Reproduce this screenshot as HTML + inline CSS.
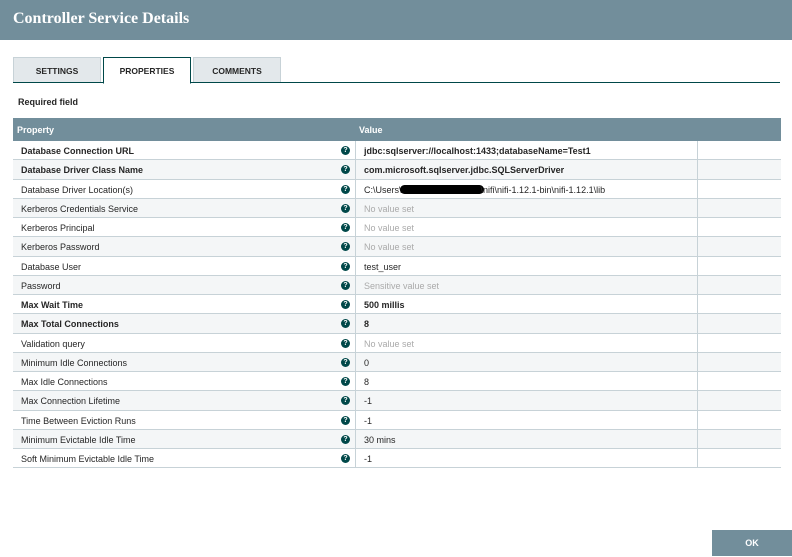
<!DOCTYPE html>
<html><head><meta charset="utf-8"><style>
*{box-sizing:border-box;margin:0;padding:0}
body{width:792px;height:556px;background:#fff;font-family:"Liberation Sans",Arial,sans-serif;position:relative;overflow:hidden;color:#262626}
.hdr{position:absolute;left:0;top:0;width:792px;height:40px;background:#728e9b;color:#fff;font-family:"Liberation Serif",serif;font-weight:bold;font-size:16px;line-height:38px;padding-left:13px}
.tabline{position:absolute;left:13px;top:82px;width:767px;height:1px;background:#004849}
.tab{position:absolute;top:57px;height:25px;width:88px;background:#e3e8eb;border:1px solid #c7d2d7;border-bottom:none;font-size:8.5px;font-weight:bold;text-align:center;line-height:26px;color:#262626}
.tab.act{background:#fff;border:1px solid #004849;border-bottom:1px solid #fff;height:27px}
.req{position:absolute;left:18px;top:97px;font-size:9px;font-weight:bold}
.th{position:absolute;left:13px;top:118px;width:768px;height:23px;background:#728e9b;color:#fff;font-size:9px;font-weight:bold}
.th span{position:absolute;top:7px}
.rows{position:absolute;left:13px;top:141px;width:768px}
.r{height:19.25px;border-bottom:1px solid #c7d2d7;position:relative;font-size:9px}
.r:nth-child(even){background:#f4f6f7}
.r .p{position:absolute;left:8px;top:5px}
.r .i{position:absolute;left:328px;top:5px;width:9px;height:9px;border-radius:50%;background:#004849;color:#fff;font-size:7px;font-weight:bold;text-align:center;line-height:9px}
.r .v{position:absolute;left:351px;top:5px}
.r .c1{position:absolute;left:342px;top:0;bottom:-1px;width:1px;background:#c7d2d7}
.r .c2{position:absolute;left:684px;top:0;bottom:-1px;width:1px;background:#c7d2d7}
.b{font-weight:bold}
.g{color:#aaa}
.ok{position:absolute;left:712px;top:530px;width:80px;height:26px;background:#728e9b;color:#fff;font-size:9px;font-weight:bold;text-align:center;line-height:27px}
.blk{display:inline-block;width:84px;height:9px;background:#000;border-radius:5px;vertical-align:-1px;margin:0 -3px 0 -2px}
</style></head><body>
<div class="hdr">Controller Service Details</div>
<div class="tabline"></div>
<div class="tab" style="left:13px">SETTINGS</div>
<div class="tab act" style="left:103px">PROPERTIES</div>
<div class="tab" style="left:193px">COMMENTS</div>
<div class="req">Required field</div>
<div class="th"><span style="left:4px">Property</span><span style="left:346px">Value</span></div>
<div class="rows">
<div class="r b"><span class="p">Database Connection URL</span><span class="i">?</span><span class="c1"></span><span class="v">jdbc:sqlserver://localhost:1433;databaseName=Test1</span><span class="c2"></span></div>
<div class="r b"><span class="p">Database Driver Class Name</span><span class="i">?</span><span class="c1"></span><span class="v">com.microsoft.sqlserver.jdbc.SQLServerDriver</span><span class="c2"></span></div>
<div class="r"><span class="p">Database Driver Location(s)</span><span class="i">?</span><span class="c1"></span><span class="v">C:\Users\<span class="blk"></span>\nifi\nifi-1.12.1-bin\nifi-1.12.1\lib</span><span class="c2"></span></div>
<div class="r"><span class="p">Kerberos Credentials Service</span><span class="i">?</span><span class="c1"></span><span class="v g">No value set</span><span class="c2"></span></div>
<div class="r"><span class="p">Kerberos Principal</span><span class="i">?</span><span class="c1"></span><span class="v g">No value set</span><span class="c2"></span></div>
<div class="r"><span class="p">Kerberos Password</span><span class="i">?</span><span class="c1"></span><span class="v g">No value set</span><span class="c2"></span></div>
<div class="r"><span class="p">Database User</span><span class="i">?</span><span class="c1"></span><span class="v">test_user</span><span class="c2"></span></div>
<div class="r"><span class="p">Password</span><span class="i">?</span><span class="c1"></span><span class="v g">Sensitive value set</span><span class="c2"></span></div>
<div class="r b"><span class="p">Max Wait Time</span><span class="i">?</span><span class="c1"></span><span class="v">500 millis</span><span class="c2"></span></div>
<div class="r b"><span class="p">Max Total Connections</span><span class="i">?</span><span class="c1"></span><span class="v">8</span><span class="c2"></span></div>
<div class="r"><span class="p">Validation query</span><span class="i">?</span><span class="c1"></span><span class="v g">No value set</span><span class="c2"></span></div>
<div class="r"><span class="p">Minimum Idle Connections</span><span class="i">?</span><span class="c1"></span><span class="v">0</span><span class="c2"></span></div>
<div class="r"><span class="p">Max Idle Connections</span><span class="i">?</span><span class="c1"></span><span class="v">8</span><span class="c2"></span></div>
<div class="r"><span class="p">Max Connection Lifetime</span><span class="i">?</span><span class="c1"></span><span class="v">-1</span><span class="c2"></span></div>
<div class="r"><span class="p">Time Between Eviction Runs</span><span class="i">?</span><span class="c1"></span><span class="v">-1</span><span class="c2"></span></div>
<div class="r"><span class="p">Minimum Evictable Idle Time</span><span class="i">?</span><span class="c1"></span><span class="v">30 mins</span><span class="c2"></span></div>
<div class="r"><span class="p">Soft Minimum Evictable Idle Time</span><span class="i">?</span><span class="c1"></span><span class="v">-1</span><span class="c2"></span></div>
</div>
<div class="ok">OK</div>
</body></html>
